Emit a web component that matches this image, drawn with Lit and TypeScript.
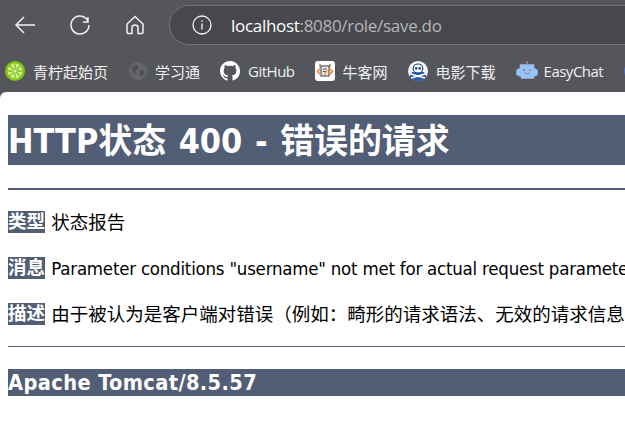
import { LitElement, css, html, svg } from 'lit'
import { customElement } from 'lit/decorators.js'

const limeIcon = svg`
  <svg class="bm-icon" viewBox="0 0 20 20">
    <circle cx="10" cy="10" r="10" fill="#7fc31c"/>
    <circle cx="10" cy="10" r="7.4" fill="#d7ee8e"/>
    <g stroke="#7fc31c" stroke-width="1.3">
      <path d="M10 2.5v15M2.5 10h15M4.7 4.7l10.6 10.6M15.3 4.7L4.7 15.3"/>
    </g>
    <circle cx="10" cy="10" r="1.6" fill="#f2f9d8"/>
  </svg>`

const globeIcon = svg`
  <svg class="bm-icon globe" viewBox="0 0 20 20">
    <circle cx="10" cy="10" r="10" fill="#65666a"/>
    <path d="M4 5l4-2 3 2-1 3-3 1 1 3-2 1-3-4zM12 9l5 0 0 4-4 4-1-3z" fill="#4f5054"/>
  </svg>`

const githubIcon = svg`
  <svg class="bm-icon" viewBox="0 0 16 16">
    <path fill="#fff" d="M8 0C3.58 0 0 3.58 0 8c0 3.54 2.29 6.53 5.47 7.59.4.07.55-.17.55-.38 0-.19-.01-.82-.01-1.49-2.01.37-2.53-.49-2.69-.94-.09-.23-.48-.94-.82-1.13-.28-.15-.68-.52-.01-.53.63-.01 1.08.58 1.23.82.72 1.21 1.87.87 2.33.66.07-.52.28-.87.51-1.07-1.78-.2-3.64-.89-3.64-3.95 0-.87.31-1.59.82-2.15-.08-.2-.36-1.02.08-2.12 0 0 .67-.21 2.2.82.64-.18 1.32-.27 2-.27s1.36.09 2 .27c1.53-1.04 2.2-.82 2.2-.82.44 1.1.16 1.92.08 2.12.51.56.82 1.27.82 2.15 0 3.07-1.87 3.75-3.65 3.95.29.25.54.73.54 1.48 0 1.07-.01 1.93-.01 2.2 0 .21.15.46.55.38A8.01 8.01 0 0 0 16 8c0-4.42-3.58-8-8-8z"/>
  </svg>`

const nowcoderIcon = svg`
  <svg class="bm-icon" viewBox="0 0 20 20">
    <rect width="20" height="20" rx="3" fill="#fff"/>
    <rect x="6" y="5" width="8" height="10" fill="#eee" stroke="#555" stroke-width="1.2"/>
    <path d="M5 3v3M15 3v3M8 8h4M8 10.5h3" stroke="#555" stroke-width="1"/>
    <path d="M5.5 7.5L2.5 10.5 5.5 13.5M14.5 7.5l3 3-3 3" fill="none" stroke="#f28a2e" stroke-width="1.7"/>
    <path d="M12 9l-2.5 5" stroke="#f28a2e" stroke-width="1.3"/>
  </svg>`

const skullIcon = svg`
  <svg class="bm-icon" viewBox="0 0 20 20">
    <circle cx="10" cy="10" r="10" fill="#f4f6f9"/>
    <path d="M1.6 15.4A10 10 0 0 0 18.4 15.4L16 11H4z" fill="#2c5da6"/>
    <path d="M10 2.4c-3.2 0-5.4 2.2-5.4 5 0 2 1 3.3 2.4 4v2.2h6v-2.2c1.4-.7 2.4-2 2.4-4 0-2.8-2.2-5-5.4-5z" fill="#1f4a8c"/>
    <ellipse cx="10" cy="7.4" rx="4.2" ry="4" fill="#fff"/>
    <circle cx="8.2" cy="7.4" r="1.3" fill="#1f4a8c"/>
    <circle cx="11.8" cy="7.4" r="1.3" fill="#1f4a8c"/>
    <path d="M8.5 11.5v1.8M10 11.5v1.8M11.5 11.5v1.8" stroke="#1f4a8c" stroke-width=".7"/>
    <path d="M3 13l14 4M17 13L3 17" stroke="#fff" stroke-width="1.5"/>
  </svg>`

const botIcon = svg`
  <svg class="bm-icon wide" viewBox="0 0 22 20">
    <rect x="10" y="0" width="2" height="2" fill="#b068b4"/>
    <path d="M11 2v2" stroke="#b59ac8" stroke-width="1"/>
    <path d="M4 3.5h14v3.5l3.5 2v5L18 15.5v2H5v-2L.5 14V9L4 7z" fill="#8fc8f5" stroke="#b59ac8" stroke-width=".7"/>
    <circle cx="8" cy="9" r="1.1" fill="#b068b4"/>
    <circle cx="14" cy="9" r="1.1" fill="#b068b4"/>
    <path d="M8.5 12q2.5 1.6 5 0" fill="none" stroke="#b068b4" stroke-width="1"/>
  </svg>`

const bookmarks = [
  { icon: limeIcon, label: '青柠起始页', latin: false },
  { icon: globeIcon, label: '学习通', latin: false },
  { icon: githubIcon, label: 'GitHub', latin: true },
  { icon: nowcoderIcon, label: '牛客网', latin: false },
  { icon: skullIcon, label: '电影下载', latin: false },
  { icon: botIcon, label: 'EasyChat', latin: true }
]

@customElement('app-root')
export class AppRoot extends LitElement {
  static styles = css`
    :host {
      display: block;
      width: 625px;
      height: 447px;
      overflow: hidden;
      background: #55565b;
      font-family: 'Open Sans', 'Noto Sans CJK SC', sans-serif;
    }

    .toolbar {
      display: flex;
      align-items: center;
      height: 50px;
      padding-left: 14px;
      box-sizing: border-box;
    }

    .nav-group {
      display: flex;
      flex: none;
      gap: 33px;
      margin-right: 23px;
    }

    .nav {
      display: block;
      flex: none;
      width: 22px;
      height: 22px;
      fill: none;
      stroke: #f2f2f3;
      stroke-width: 1.5;
    }

    .omnibox {
      display: flex;
      align-items: center;
      flex: none;
      width: 600px;
      height: 40px;
      padding-left: 22px;
      box-sizing: border-box;
      background: #47484c;
      border: 1px solid #727377;
      border-radius: 20px;
      color: #fff;
      font-size: 17px;
      letter-spacing: -0.3px;
    }

    .info {
      flex: none;
      width: 20px;
      height: 20px;
      margin-right: 19px;
      fill: none;
      stroke: #f2f2f3;
      stroke-width: 1.3;
    }

    .host-rest {
      color: #b5b6b9;
    }

    .bookmarks {
      display: flex;
      align-items: center;
      height: 42px;
      padding-left: 5px;
      color: #f1f1f2;
      font-size: 15px;
      white-space: nowrap;
    }

    .bookmark {
      display: flex;
      align-items: center;
      gap: 8px;
      flex: none;
      margin-right: 20px;
    }

    .latin {
      letter-spacing: -0.5px;
    }

    .bm-icon {
      display: block;
      width: 20px;
      height: 20px;
      flex: none;
    }

    .bm-icon.wide {
      width: 22px;
      margin-right: -2px;
    }

    .bm-icon.globe {
      width: 18px;
      height: 18px;
      margin-left: 1px;
    }

    .more {
      flex: none;
      width: 20px;
      height: 20px;
      margin-left: 1px;
      border-radius: 50%;
      background: #3f6fe0;
    }

    .page {
      height: 355px;
      box-sizing: border-box;
      padding: 23px 0 0 8px;
      overflow: hidden;
      background: #fff;
      border-top-left-radius: 6px;
      color: #000;
      font-family: 'DejaVu Sans Condensed', 'DejaVu Sans', 'Noto Sans CJK SC', sans-serif;
      font-stretch: condensed;
      white-space: nowrap;
    }

    h1, h3, p, hr {
      margin: 0;
    }

    h1, h3, b {
      color: #fff;
      background: #525d76;
    }

    h1 {
      width: 900px;
      height: 50px;
      font-size: 33.9px;
      line-height: 54px;
      font-weight: bold;
      word-spacing: 2px;
    }

    h3 {
      width: 900px;
      height: 27px;
      margin-top: 22px;
      font-size: 21.6px;
      line-height: 27px;
      letter-spacing: 0.4px;
    }

    hr {
      width: 900px;
      border: none;
      background: #525d76;
    }

    .line-thick {
      height: 2px;
      margin-top: 23px;
      margin-bottom: 21px;
    }

    .line-thin {
      height: 1px;
      margin-top: 21px;
    }

    p {
      height: 22px;
      margin-bottom: 24px;
      font-size: 18.5px;
      line-height: 22px;
    }

    p:last-of-type {
      margin-bottom: 0;
    }

    p span {
      position: relative;
      top: 1px;
    }

    b {
      display: inline-block;
      height: 22px;
      margin-right: 1px;
      font-size: 18.5px;
      line-height: 22px;
      vertical-align: top;
    }

    .message {
      letter-spacing: -0.22px;
    }
  `

  render () {
    return html`
      <div class="toolbar">
        <div class="nav-group">
          <svg class="nav" viewBox="0 0 22 22"><path d="M21 11H2M10 3l-8 8 8 8"/></svg>
          <svg class="nav" viewBox="0 0 22 22"><path d="M19 3v5h-5M20 11a9 9 0 1 1-2.5-6.2L19 7"/></svg>
          <svg class="nav" viewBox="0 0 22 22"><path d="M11 2.5L3 10v8.5q0 1 1 1h4v-6q0-2.5 3-2.5t3 2.5v6h4q1 0 1-1V10z"/></svg>
        </div>
        <div class="omnibox">
          <svg class="info" viewBox="0 0 20 20">
            <circle cx="10" cy="10" r="9"/>
            <path d="M10 8.5v6M10 5.2v1.6"/>
          </svg>
          <span>localhost<span class="host-rest">:8080/role/save.do</span></span>
        </div>
      </div>
      <div class="bookmarks">
        ${bookmarks.map(item => html`
          <div class="bookmark">${item.icon}<span class=${item.latin ? 'latin' : ''}>${item.label}</span></div>
        `)}
        <div class="more"></div>
      </div>
      <div class="page">
        <h1>HTTP状态 400 - 错误的请求</h1>
        <hr class="line-thick">
        <p><b>类型</b> <span>状态报告</span></p>
        <p><b>消息</b> <span class="message">Parameter conditions "username" not met for actual request parameters: </span></p>
        <p><b>描述</b> <span>由于被认为是客户端对错误（例如：畸形的请求语法、无效的请求信息帧或者虚拟的请求路由），服务器无法或不会处理当前请求。</span></p>
        <hr class="line-thin">
        <h3>Apache Tomcat/8.5.57</h3>
      </div>
    `
  }
}
